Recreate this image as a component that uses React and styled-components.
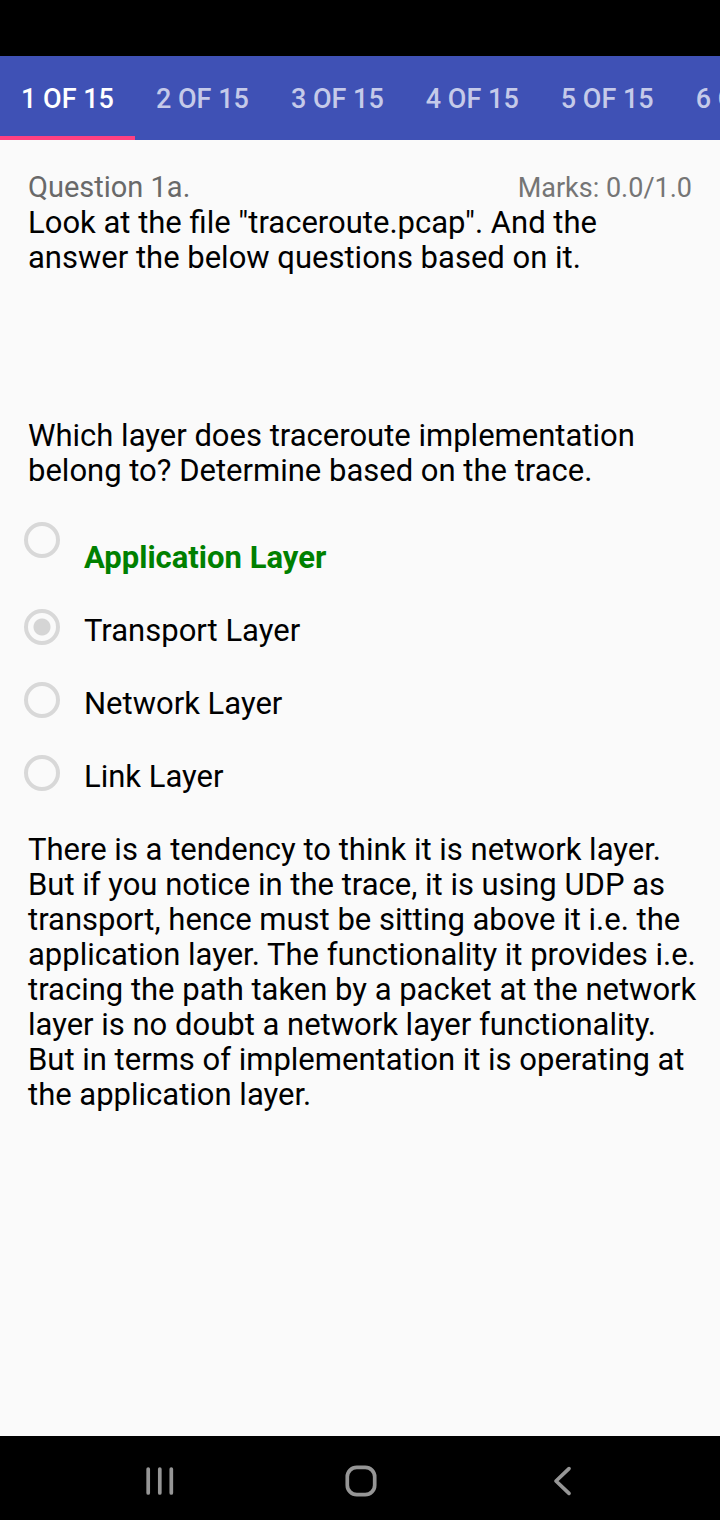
import React, { useState } from "react";
import styled, { createGlobalStyle } from "styled-components";

const Global = createGlobalStyle`
  * { box-sizing: border-box; }
  body { margin: 0; background: #fafafa; font-family: Roboto, sans-serif; color: #000; }
  p, h1 { margin: 0; }
`;
const Screen = styled.div`
  min-height: 100vh;
  display: flex;
  flex-direction: column;
  background: #fafafa;
`;
const StatusBar = styled.div`
  height: 56px;
  background: #000;
`;
const Tabs = styled.nav`
  display: flex;
  height: 84px;
  background: #3f51b5;
  overflow: hidden;
`;
const Tab = styled.button`
  flex: none;
  padding: 6px 21px 0;
  border: 0;
  border-bottom: 4px solid ${(p) => (p.$active ? "#ff4081" : "transparent")};
  background: none;
  color: ${(p) => (p.$active ? "#fff" : "#c5cae9")};
  font: 500 27px/32px Roboto, sans-serif;
  white-space: nowrap;
`;
const Content = styled.main`
  flex: 1;
  padding: 30px 20px 30px 28px;
  font-size: 31px;
  line-height: 35px;
`;
const Heading = styled.header`
  display: flex;
  align-items: baseline;
  justify-content: space-between;
  height: 35px;
  padding-right: 8px;
`;
const Title = styled.h1`
  color: #696969;
  font-size: 29px;
  font-weight: 400;
  line-height: 35px;
`;
const Marks = styled.span`
  color: #757575;
  font-size: 27px;
  line-height: 35px;
`;
const Question = styled.p`
  margin-top: 143px;
`;
const Options = styled.fieldset`
  margin: 30px 0 8px -4px;
  padding: 0;
  border: 0;
`;
const Option = styled.label`
  display: flex;
  align-items: flex-start;
  gap: 24px;
  height: ${(p) => (p.$correct ? 87 : 73)}px;
  padding-top: 4px;
`;
const Radio = styled.input`
  appearance: none;
  flex: none;
  width: 36px;
  height: 36px;
  margin: 0;
  border: 4px solid #d8d8d8;
  border-radius: 50%;
  background: ${(p) => (p.checked ? "radial-gradient(circle, #d5d5d5 8px, transparent 9px)" : "none")};
`;
const Label = styled.span`
  padding-top: ${(p) => (p.$correct ? 18 : 4)}px;
  color: ${(p) => (p.$correct ? "#008000" : "#000")};
  font-weight: ${(p) => (p.$correct ? 700 : 400)};
`;
const NavBar = styled.nav`
  display: grid;
  grid-template-columns: repeat(3, 1fr);
  align-items: center;
  justify-items: center;
  height: 84px;
  padding: 6px 58px 0 60px;
  background: #000;
`;
const NavButton = styled.button`
  display: flex;
  padding: 0;
  border: 0;
  background: none;
  color: #969696;
`;
const Icon = styled.svg`
  width: 36px;
  height: 36px;
  fill: none;
  stroke: currentColor;
  stroke-width: 3.7;
  stroke-linecap: round;
  stroke-linejoin: round;
`;

const tabs = Array.from({ length: 6 }, (_, i) => `${i + 1} OF 15`);
const options = [
  { text: "Application Layer", correct: true },
  { text: "Transport Layer" },
  { text: "Network Layer" },
  { text: "Link Layer" },
];

export default function App() {
  const [tab, setTab] = useState(0);
  const [answer, setAnswer] = useState(1);
  return (
    <Screen>
      <Global />
      <StatusBar />
      <Tabs aria-label="Questions">
        {tabs.map((t, i) => (
          <Tab key={t} $active={i === tab} onClick={() => setTab(i)}>{t}</Tab>
        ))}
      </Tabs>
      <Content>
        <Heading>
          <Title>Question 1a.</Title>
          <Marks>Marks: 0.0/1.0</Marks>
        </Heading>
        <p>Look at the file "traceroute.pcap". And the answer the below questions based on it.</p>
        <Question>Which layer does traceroute implementation belong to? Determine based on the trace.</Question>
        <Options aria-label="Answers">
          {options.map((o, i) => (
            <Option key={o.text} $correct={o.correct}>
              <Radio type="radio" name="answer" checked={i === answer} onChange={() => setAnswer(i)} />
              <Label $correct={o.correct}>{o.text}</Label>
            </Option>
          ))}
        </Options>
        <p>
          There is a tendency to think it is network layer. But if you notice in the trace, it is using UDP as
          transport, hence must be sitting above it i.e. the application layer. The functionality it provides i.e.
          tracing the path taken by a packet at the network layer is no doubt a network layer functionality. But in
          terms of implementation it is operating at the application layer.
        </p>
      </Content>
      <NavBar aria-label="System">
        <NavButton aria-label="Recents">
          <Icon viewBox="0 0 36 36"><path d="M6.2 6V30M17.8 6V30M29.3 6V30" /></Icon>
        </NavButton>
        <NavButton aria-label="Home">
          <Icon viewBox="0 0 36 36"><rect x="4.3" y="4.3" width="27.4" height="27.4" rx="9.5" /></Icon>
        </NavButton>
        <NavButton aria-label="Back">
          <Icon viewBox="0 0 36 36"><path d="M25 5.6L12 18L25 30.4" /></Icon>
        </NavButton>
      </NavBar>
    </Screen>
  );
}
